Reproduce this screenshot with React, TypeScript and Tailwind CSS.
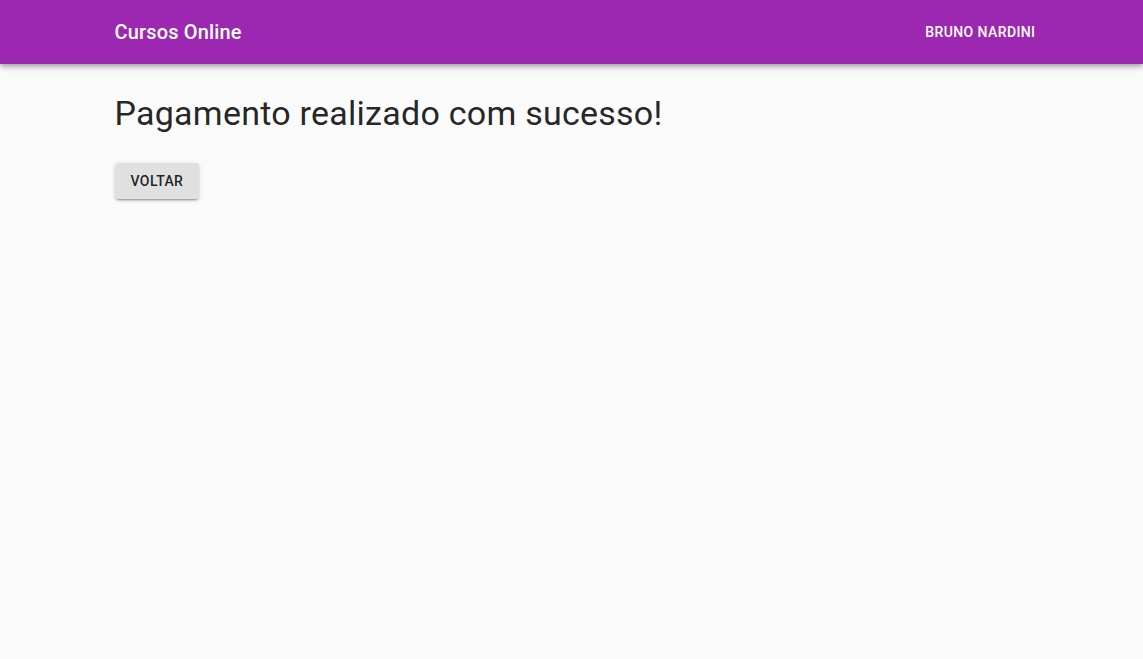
import React from "react";

export default function App() {
  return (
    <div className="min-h-[659px] bg-[#fafafa] text-[rgba(0,0,0,0.87)]" style={{ fontFamily: "Roboto, 'Liberation Sans', sans-serif" }}>
      <header className="h-16 bg-[#9c27b0] text-white shadow-[0_2px_4px_-1px_rgba(0,0,0,0.2),0_4px_5px_0_rgba(0,0,0,0.14),0_1px_10px_0_rgba(0,0,0,0.12)] relative z-10">
        <div className="mx-auto max-w-[960px] px-6 h-full flex items-center justify-between">
          <h6 className="text-[20px] font-medium leading-[1.6] tracking-[0.0075em] -ml-px">Cursos Online</h6>
          <button className="px-2 py-[6px] text-[14px] font-medium uppercase tracking-[0.02857em] leading-[1.75] -mr-[16px] rounded">
            Bruno Nardini
          </button>
        </div>
      </header>
      <main className="mx-auto max-w-[960px] px-6 pt-[29px]">
        <h4 className="text-[34px] font-normal leading-[1.235] tracking-[0.00735em] -ml-px">Pagamento realizado com sucesso!</h4>
        <button className="mt-[28px] -ml-px bg-[#e0e0e0] px-4 py-[6px] text-[14px] font-medium uppercase tracking-[0.02857em] leading-[1.75] rounded shadow-[0_3px_1px_-2px_rgba(0,0,0,0.2),0_2px_2px_0_rgba(0,0,0,0.14),0_1px_5px_0_rgba(0,0,0,0.12)]">
          Voltar
        </button>
      </main>
    </div>
  );
}
